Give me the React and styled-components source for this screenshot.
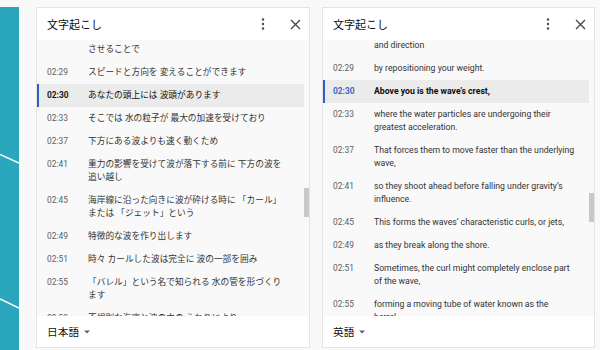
import React from "react";
import styled, { createGlobalStyle } from "styled-components";

const jaRows = [
  { time: "02:26", lines: ["体の重心を移動", "させることで"] },
  { time: "02:29", lines: ["スピードと方向を 変えることができます"] },
  { time: "02:30", lines: ["あなたの頭上には 波頭があります"], active: true },
  { time: "02:33", lines: ["そこでは 水の粒子が 最大の加速を受けており"] },
  { time: "02:37", lines: ["下方にある波よりも速く動くため"] },
  { time: "02:41", lines: ["重力の影響を受けて波が落下する前に 下方の波を", "追い越し"] },
  { time: "02:45", lines: ["海岸線に沿った向きに波が砕ける時に 「カール」", "または 「ジェット」という"] },
  { time: "02:49", lines: ["特徴的な波を作り出します"] },
  { time: "02:51", lines: ["時々 カールした波は完全に 波の一部を囲み"] },
  { time: "02:55", lines: ["「バレル」という名で知られる 水の管を形づくり", "ます"] },
  { time: "02:59", lines: ["不規則な海底と波の中の うねりにより"] },
];

const enRows = [
  { time: "02:26", lines: ["You can change your speed", "and direction"] },
  { time: "02:29", lines: ["by repositioning your weight."] },
  { time: "02:30", lines: ["Above you is the wave’s crest,"], active: true },
  { time: "02:33", lines: ["where the water particles are undergoing their", "greatest acceleration."] },
  { time: "02:37", lines: ["That forces them to move faster than the underlying", "wave,"] },
  { time: "02:41", lines: ["so they shoot ahead before falling under gravity’s", "influence."] },
  { time: "02:45", lines: ["This forms the waves’ characteristic curls, or jets,"] },
  { time: "02:49", lines: ["as they break along the shore."] },
  { time: "02:51", lines: ["Sometimes, the curl might completely enclose part", "of the wave,"] },
  { time: "02:55", lines: ["forming a moving tube of water known as the", "barrel."] },
];

const KebabIcon = () => (
  <svg width="4" height="12" viewBox="0 0 4 12">
    <circle cx="2" cy="1.5" r="1.2" fill="#4a4a4a" />
    <circle cx="2" cy="6" r="1.2" fill="#4a4a4a" />
    <circle cx="2" cy="10.5" r="1.2" fill="#4a4a4a" />
  </svg>
);

const CloseIcon = () => (
  <svg width="11" height="11" viewBox="0 0 11 11">
    <path d="M1 1 L10 10 M10 1 L1 10" stroke="#444" strokeWidth="1.3" fill="none" />
  </svg>
);

const Caret = () => (
  <svg width="6" height="4" viewBox="0 0 6 4">
    <path d="M0 0.5 L6 0.5 L3 3.5 Z" fill="#606060" />
  </svg>
);

const Transcript = ({ width, rows, offset, thumbTop, language, blueActive }) => (
  <Panel $width={width}>
    <Header>
      <Title>文字起こし</Title>
      <IconButton>
        <KebabIcon />
      </IconButton>
      <IconButton>
        <CloseIcon />
      </IconButton>
    </Header>
    <Body>
      <List>
        <Inner $offset={offset}>
          {rows.map((r) => (
            <Row key={r.time} $active={r.active}>
              <Time $active={r.active} $blue={blueActive}>
                {r.time}
              </Time>
              <Text $active={r.active} $bold={blueActive}>
                {r.lines.map((l, i) => (
                  <Line key={i}>{l}</Line>
                ))}
              </Text>
            </Row>
          ))}
        </Inner>
      </List>
      <Track>
        <Thumb $top={thumbTop} />
      </Track>
    </Body>
    <Footer>
      <Lang>{language}</Lang>
      <Caret />
    </Footer>
  </Panel>
);

const App = () => {
  return (
    <>
      <GlobalStyle />
      <Page>
        <VideoEdge>
          <svg width="19" height="343" viewBox="0 0 19 343">
            <path d="M0 147.5 L19 156" stroke="#fff" strokeWidth="1.4" />
            <path d="M0 292 L19 301" stroke="#fff" strokeWidth="1.4" />
          </svg>
        </VideoEdge>
        <Panels>
          <Transcript
            width={274}
            rows={jaRows}
            offset={-15.5}
            thumbTop={148}
            language="日本語"
          />
          <Transcript
            width={273}
            rows={enRows}
            offset={-19.5}
            thumbTop={153}
            language="英語"
            blueActive
          />
        </Panels>
      </Page>
    </>
  );
};

export default App;

const GlobalStyle = createGlobalStyle`
  body {
    margin: 0;
    background: #f9f9f9;
    font-family: Roboto, "Noto Sans CJK JP", sans-serif;
  }
`;

const Page = styled.div`
  display: flex;
  height: 350px;
  padding-top: 7px;
  box-sizing: border-box;
  overflow: hidden;
`;

const VideoEdge = styled.div`
  width: 19px;
  flex: none;
  margin-right: 17px;
  background: #2ba7bd;
  overflow: hidden;

  svg {
    display: block;
  }
`;

const Panels = styled.div`
  display: flex;
  gap: 12px;
  align-items: flex-start;
`;

const Panel = styled.section`
  width: ${(p) => p.$width}px;
  height: 341px;
  box-sizing: border-box;
  border: 1px solid #e4e4e4;
  background: #fff;
  display: flex;
  flex-direction: column;
`;

const Header = styled.div`
  height: 32px;
  flex: none;
  display: flex;
  align-items: center;
  padding: 0 4px 0 10px;
  gap: 12px;
`;

const Title = styled.div`
  flex: 1;
  font-size: 11px;
  color: #0f0f0f;
`;

const IconButton = styled.div`
  width: 20px;
  height: 20px;
  display: flex;
  align-items: center;
  justify-content: center;
`;

const Body = styled.div`
  flex: 1;
  min-height: 0;
  display: flex;
  background: #f9f9f9;
  overflow: hidden;
`;

const List = styled.div`
  flex: 1;
  overflow: hidden;
`;

const Inner = styled.div`
  margin-top: ${(p) => p.$offset}px;
`;

const Row = styled.div`
  display: flex;
  padding: 5px 0 5px 8px;
  line-height: 13px;
  border-left: 2px solid ${(p) => (p.$active ? "#2f5fc4" : "transparent")};
  background: ${(p) => (p.$active ? "#ebebeb" : "transparent")};
`;

const Time = styled.div`
  width: 41px;
  flex: none;
  font-size: 8.4px;
  color: ${(p) => (p.$active ? (p.$blue ? "#3b68c9" : "#1a1a1a") : "#606060")};
  font-weight: ${(p) => (p.$active ? 700 : 400)};
`;

const Text = styled.div`
  flex: 1;
  min-width: 0;
  font-size: 8.7px;
  color: ${(p) => (p.$active ? "#0f0f0f" : "#333")};
  font-weight: ${(p) => (p.$active && p.$bold ? 700 : 400)};
  white-space: nowrap;
  overflow: hidden;
`;

const Line = styled.div``;

const Track = styled.div`
  width: 5px;
  flex: none;
`;

const Thumb = styled.div`
  margin-top: ${(p) => p.$top}px;
  height: 29px;
  background: #c8c8c8;
`;

const Footer = styled.div`
  height: 31px;
  flex: none;
  display: flex;
  align-items: center;
  gap: 5px;
  padding-left: 10px;
`;

const Lang = styled.span`
  font-size: 10.7px;
  color: #0f0f0f;
`;
